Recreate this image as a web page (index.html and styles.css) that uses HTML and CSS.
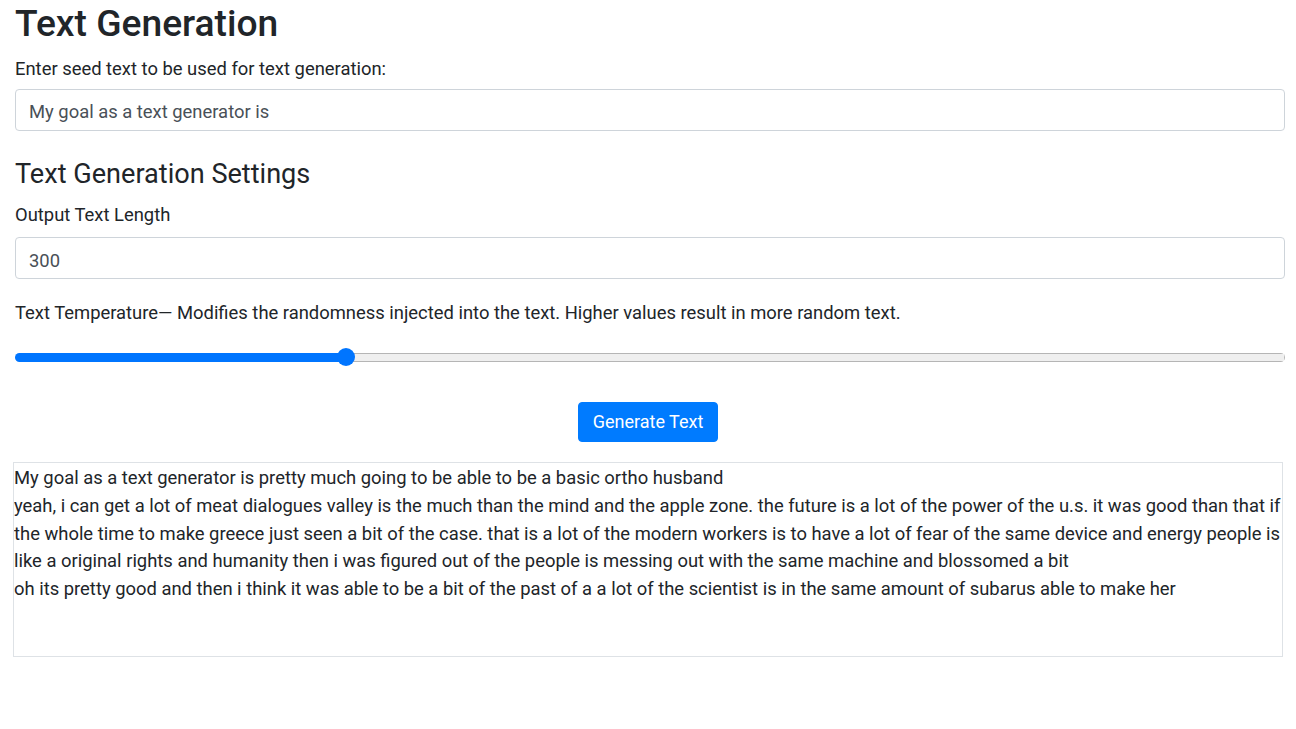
FILE: index.html
```html
<!DOCTYPE html>
<html lang="en">
<head>
<meta charset="utf-8">
<title>Text Generation</title>
<link rel="stylesheet" href="styles.css">
</head>
<body>
<div class="page">
  <h1 class="title">Text Generation</h1>
  <div class="field field-seed">
    <label class="label" for="seed">Enter seed text to be used for text generation:</label>
    <input class="form-control" id="seed" type="text" value="My goal as a text generator is">
  </div>
  <h3 class="subtitle">Text Generation Settings</h3>
  <div class="field field-length">
    <label class="label" for="len">Output Text Length</label>
    <input class="form-control" id="len" type="text" value="300">
  </div>
  <div class="field field-temp">
    <label class="label" for="temp">Text Temperature— Modifies the randomness injected into the text. Higher values result in more random text.</label>
    <input class="range" id="temp" type="range" min="0" max="100" step="any" value="25.7">
  </div>
  <div class="actions">
    <button class="btn-primary" type="button">Generate Text</button>
  </div>
</div>
<div class="output">My goal as a text generator is pretty much going to be able to be a basic ortho husband<br>yeah, i can get a lot of meat dialogues valley is the much than the mind and the apple zone. the future is a lot of the power of the u.s. it was good than that if<br>the whole time to make greece just seen a bit of the case. that is a lot of the modern workers is to have a lot of fear of the same device and energy people is<br>like a original rights and humanity then i was figured out of the people is messing out with the same machine and blossomed a bit<br>oh its pretty good and then i think it was able to be a bit of the past of a a lot of the scientist is in the same amount of subarus able to make her</div>
</body>
</html>
```

FILE: styles.css
```css
html, body {
  margin: 0;
  padding: 0;
  background: #fff;
}
body {
  font-family: Roboto, "Noto Sans", sans-serif;
  font-size: 18.4px;
  line-height: 27.6px;
  color: #212529;
}
.page {
  padding: 0 11px 0 15px;
}
.title {
  margin: 0 0 9px;
  font-size: 37.2px;
  font-weight: 500;
  line-height: 46px;
}
.label {
  display: block;
}
.field-seed .label {
  margin-bottom: 6.4px;
}
.field-length .label {
  margin-bottom: 8.4px;
}
.field-temp {
  margin-top: 20px;
}
.form-control {
  display: block;
  box-sizing: border-box;
  width: 100%;
  height: 42px;
  padding: 8px 13px 4px;
  font-family: inherit;
  font-size: 18.4px;
  line-height: 27.6px;
  color: #495057;
  background: #fff;
  border: 1px solid #ced4da;
  border-radius: 4px;
  margin: 0;
}
.subtitle {
  margin: 27px 0 11px;
  font-size: 27.1px;
  font-weight: 400;
  line-height: 32.5px;
}
.range {
  -webkit-appearance: none;
  appearance: none;
  display: block;
  width: 100%;
  height: 18px;
  margin: 21.4px 0 0;
  padding: 0;
  background: transparent;
}
.range::-webkit-slider-runnable-track {
  height: 9px;
  border-radius: 5px;
  background:
    linear-gradient(#0075ff, #0075ff) left center / 26% 100% no-repeat,
    linear-gradient(#efefef, #efefef) center / calc(100% - 2px) calc(100% - 2px) no-repeat,
    #b5b5b5;
}
.range::-webkit-slider-thumb {
  -webkit-appearance: none;
  appearance: none;
  width: 18px;
  height: 18px;
  margin-top: -4.5px;
  border-radius: 50%;
  background: #0075ff;
  border: none;
}
.actions {
  display: flex;
  justify-content: center;
  margin: 36px 2px 0 -2px;
}
.btn-primary {
  font-family: inherit;
  font-size: 18px;
  line-height: 26px;
  height: 40px;
  padding: 6px 13.5px;
  color: #fff;
  background: #007bff;
  border: 1px solid #007bff;
  border-radius: 4px;
}
.output {
  margin: 20px 13px 0 13px;
  height: 195px;
  box-sizing: border-box;
  border: 1px solid #dee2e6;
  padding: 1px 0 0 0;
  white-space: nowrap;
  overflow: hidden;
}
```
